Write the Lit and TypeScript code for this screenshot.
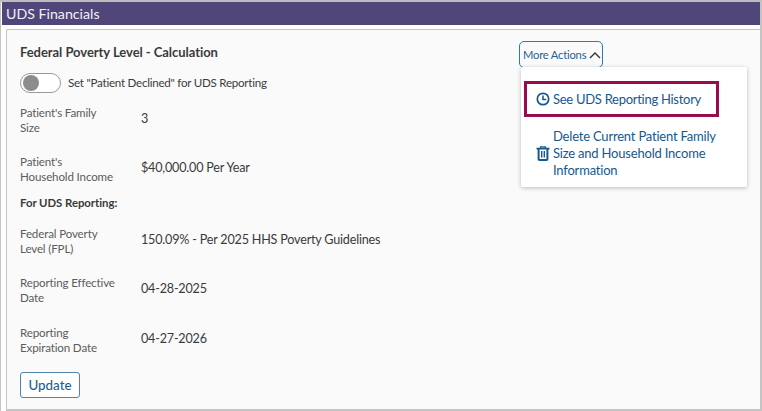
import { LitElement, html, css } from "lit";
import { customElement } from "lit/decorators.js";

@customElement("app-root")
export class AppRoot extends LitElement {
  static styles = css`
    :host { display: block; width: 762px; height: 411px; overflow: hidden; background: #fff; font-family: "Lato", sans-serif; font-size: 12px; color: #333; position: relative; box-sizing: border-box; }
    * { box-sizing: border-box; }
    .page { height: 411px; display: flex; flex-direction: column; border-top: 2px solid #bdbdbd; border-right: 2px solid #c4c4c4; border-left: 1px solid #c4c4c4; }
    .bar { height: 23px; margin-left: 1px; background: #514679; color: #f1eff7; font-size: 14.2px; line-height: 24px; padding-left: 4px; flex: none; }
    .card { flex: 1; margin: 4px 0 0 5px; background: #fafafa; border: 1px solid #c4c4c4; border-right: none; padding: 13px 13px 0; border-bottom: 2px solid #c4c4c4; border-radius: 2px 0 0 0; position: relative; }
    h2 { margin: 0; font-size: 13px; font-weight: 700; color: #3a3a3a; line-height: 18px; letter-spacing: -0.05px; }
    .toggle-row { display: flex; align-items: center; gap: 7px; margin-top: 12px; font-size: 11.6px; letter-spacing: -0.25px; color: #3d3d3d; }
    .toggle-row span { padding-bottom: 1px; }
    .toggle { width: 41px; height: 20px; border: 1px solid #999; border-radius: 10px; background: #fff; display: flex; align-items: center; padding-left: 2px; }
    .knob { width: 16px; height: 16px; border-radius: 50%; background: #8c8c8c; }
    .row { display: grid; grid-template-columns: 121px 1fr; align-items: center; }
    .lab { font-size: 11.6px; line-height: 15px; color: #5c5c5c; white-space: pre-line; letter-spacing: -0.15px; }
    .val { font-size: 12.6px; color: #3a3a3a; padding-bottom: 3px; letter-spacing: -0.2px; }
    .bold { font-size: 11.4px; font-weight: 700; color: #3a3a3a; line-height: 16px; letter-spacing: -0.05px; }
    .update { display: block; margin-top: 17px; width: 60px; height: 26px; border: 1px solid #4f84ab; border-radius: 3px; background: #fff; color: #1f5f8f; font: 500 13.4px "Lato", sans-serif; padding: 0; }
    .more { position: absolute; left: 512px; top: 11px; width: 84px; height: 27px; border: 1.5px solid #2a7ab8; border-radius: 5px; background: #fafafa; color: #1f6396; font-size: 11.2px; letter-spacing: -0.2px; display: flex; align-items: center; gap: 3px; padding-left: 3px; white-space: nowrap; }
    .menu { position: absolute; left: 514px; top: 37px; width: 226px; height: 120px; background: #fff; border-radius: 2px; box-shadow: 0 1px 4px rgba(0,0,0,.25); color: #15588f; font-size: 13px; letter-spacing: -0.2px; line-height: 17px; }
    .hl { position: absolute; left: 3px; top: 14px; width: 195px; height: 36px; border: 3px solid #9b0a50; display: flex; align-items: center; gap: 3px; padding-left: 9px; white-space: nowrap; letter-spacing: -0.28px; }
    .del { position: absolute; left: 15px; top: 61px; display: flex; align-items: center; gap: 3px; }
    .del span { width: 180px; }
    svg { display: block; flex: none; }
  `;

  row(label: string, value: string, gap: number) {
    return html`<div class="row" style="height:30px;margin-top:${gap}px"><div class="lab">${label}</div><div class="val">${value}</div></div>`;
  }

  render() {
    return html`<div class="page">
      <div class="bar">UDS Financials</div>
      <div class="card">
        <h2>Federal Poverty Level - Calculation</h2>
        <div class="toggle-row"><div class="toggle"><div class="knob"></div></div><span>Set "Patient Declined" for UDS Reporting</span></div>
        ${this.row("Patient's Family\nSize", "3", 12)}
        ${this.row("Patient's\nHousehold Income", "$40,000.00 Per Year", 19)}
        <div class="bold" style="margin-top:11px">For UDS Reporting:</div>
        ${this.row("Federal Poverty\nLevel (FPL)", "150.09% - Per 2025 HHS Poverty Guidelines", 15)}
        ${this.row("Reporting Effective\nDate", "04-28-2025", 19)}
        ${this.row("Reporting\nExpiration Date", "04-27-2026", 20)}
        <button class="update">Update</button>
        <div class="more">More Actions
          <svg width="12" height="8" viewBox="0 0 12 8"><path d="M1 7 6 2l5 5" fill="none" stroke="#333" stroke-width="1.4"/></svg>
        </div>
        <div class="menu">
          <div class="hl">
            <svg width="14" height="14" viewBox="0 0 14 14"><circle cx="7" cy="7" r="5.7" fill="none" stroke="#15588f" stroke-width="1.7"/><path d="M7 3.4V7.4H10.2" fill="none" stroke="#15588f" stroke-width="1.5"/></svg>
            <span>See UDS Reporting History</span>
          </div>
          <div class="del">
            <svg width="14" height="15" viewBox="0 0 14 15"><path d="M0.5 2.6H13.5" fill="none" stroke="#15588f" stroke-width="1.8"/><path d="M4.6 2V0.8H9.4V2" fill="none" stroke="#15588f" stroke-width="1.3"/><path d="M2.6 3V13.2Q2.6 14 3.4 14H10.6Q11.4 14 11.4 13.2V3" fill="none" stroke="#15588f" stroke-width="2"/><path d="M5.7 5V11.5M8.3 5V11.5" fill="none" stroke="#15588f" stroke-width="1.4"/></svg>
            <span>Delete Current Patient Family Size and Household Income Information</span>
          </div>
        </div>
      </div>
    </div>`;
  }
}
